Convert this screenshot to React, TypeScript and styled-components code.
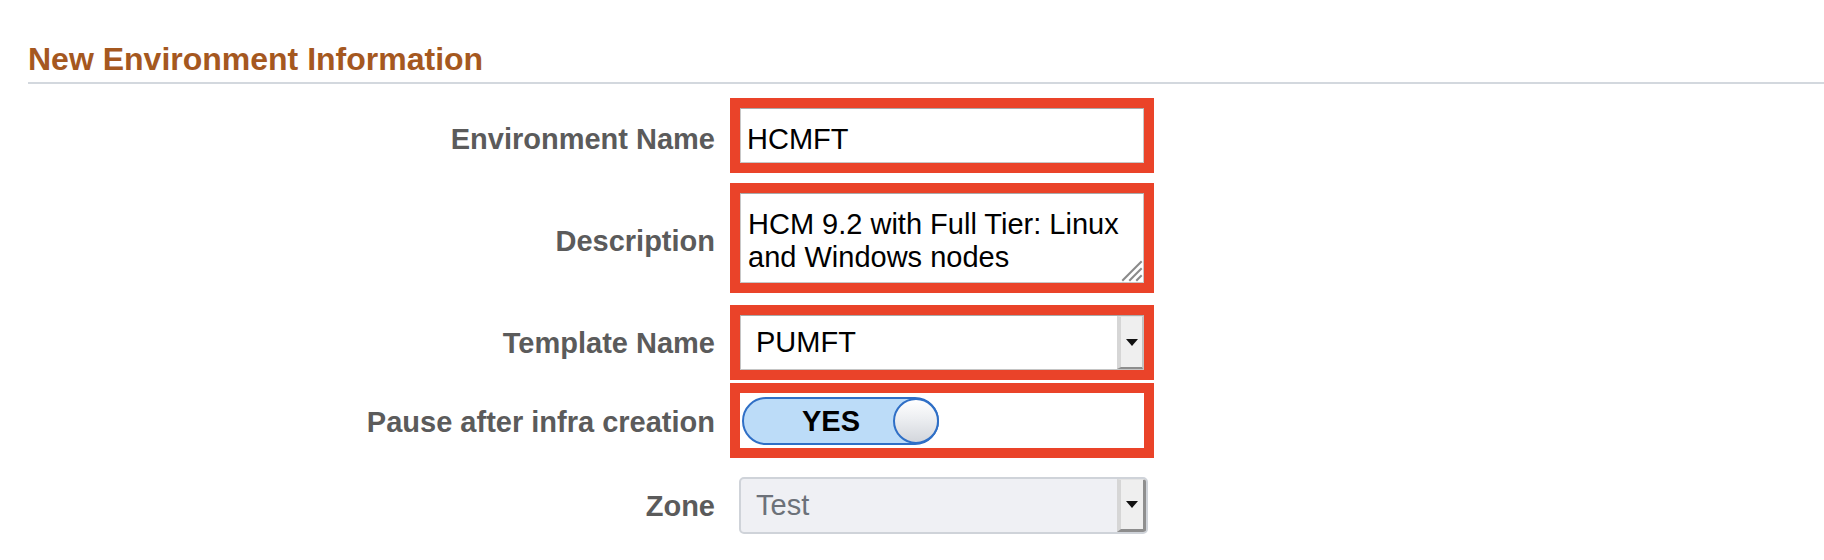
import React from "react";
import styled, { createGlobalStyle } from "styled-components";

const GlobalStyle = createGlobalStyle`
  html, body { margin: 0; padding: 0; background: #ffffff; }
  body { font-family: "Liberation Sans", Arial, sans-serif; }
`;

const Page = styled.div`
  width: 1824px;
  height: 560px;
  box-sizing: border-box;
  padding-top: 41px;
  overflow: hidden;
  background: #ffffff;
`;

const SectionHeader = styled.div`
  margin-left: 28px;
  padding-bottom: 4px;
  border-bottom: 2px solid #d3d8de;
`;

const Heading = styled.h2`
  margin: 0;
  font-size: 32px;
  line-height: 37px;
  font-weight: 700;
  color: #a5581f;
`;

const Form = styled.div`
  display: flex;
  flex-direction: column;
  padding-left: 30px;
  margin-top: 14px;
`;

const Row = styled.div<{ $gap: number }>`
  display: flex;
  align-items: center;
  gap: 15px;
  margin-top: ${(p) => p.$gap}px;
`;

const Label = styled.div<{ $drop: number }>`
  width: 685px;
  flex: none;
  text-align: right;
  font-size: 29px;
  line-height: 33px;
  font-weight: 700;
  color: #5b5b5b;
  padding-top: ${(p) => p.$drop}px;
`;

const Frame = styled.div<{ $marked?: boolean }>`
  width: 404px;
  flex: none;
  border: 10px solid ${(p) => (p.$marked ? "#ea4329" : "transparent")};
`;

const TextInput = styled.div`
  box-sizing: border-box;
  height: 55px;
  border: 1px solid #c7c7c7;
  border-top-color: #a9a9a9;
  padding: 14px 6px 0;
  font-size: 29px;
  line-height: 33px;
  color: #000000;
  background: #ffffff;
`;

const TextArea = styled.div`
  position: relative;
  box-sizing: border-box;
  height: 90px;
  border: 1px solid #c7c7c7;
  border-top-color: #a9a9a9;
  padding: 14px 6px 0 7px;
  font-size: 29px;
  line-height: 33px;
  color: #000000;
  background: #ffffff;
`;

const Grip = styled.svg`
  position: absolute;
  right: 0;
  bottom: 0;
  width: 22px;
  height: 22px;
`;

const Select = styled.div<{ $disabled?: boolean }>`
  box-sizing: border-box;
  display: flex;
  height: ${(p) => (p.$disabled ? 57 : 55)}px;
  width: ${(p) => (p.$disabled ? 409 : 404)}px;
  margin-left: ${(p) => (p.$disabled ? -1 : 0)}px;
  border: ${(p) => (p.$disabled ? "2px solid #cfd3d9" : "1px solid #c4c4c4")};
  border-top-color: ${(p) => (p.$disabled ? "#cfd3d9" : "#a9a9a9")};
  border-radius: ${(p) => (p.$disabled ? 5 : 0)}px;
  background: ${(p) => (p.$disabled ? "#eff0f4" : "#ffffff")};
  color: ${(p) => (p.$disabled ? "#6c7179" : "#000000")};
  overflow: hidden;
`;

const SelectValue = styled.div`
  flex: 1;
  padding: 10px 0 0 15px;
  font-size: 29px;
  line-height: 33px;
`;

const DropButton = styled.div<{ $disabled?: boolean }>`
  box-sizing: border-box;
  flex: none;
  width: ${(p) => (p.$disabled ? 29 : 26)}px;
  display: flex;
  align-items: center;
  justify-content: center;
  background: #efefef;
  border-left: 4px solid #d6d6d6;
  border-top: 1px solid #e4e4e4;
  border-bottom: ${(p) => (p.$disabled ? 3 : 2)}px solid #8d8d8d;
  border-right: ${(p) => (p.$disabled ? "3px solid #8f8f8f" : "1px solid #c2c2c2")};
`;

const Arrow = styled.span`
  width: 0;
  height: 0;
  border-left: 6px solid transparent;
  border-right: 6px solid transparent;
  border-top: 7px solid #111111;
`;

const ToggleArea = styled.div`
  box-sizing: border-box;
  height: 55px;
  padding: 4px 0 0 2px;
  background: #ffffff;
`;

const Toggle = styled.div`
  box-sizing: border-box;
  width: 197px;
  height: 48px;
  border: 2px solid #2f6fc6;
  border-radius: 24px;
  background: #bcdcf8;
  display: flex;
  align-items: center;
  padding-left: 58px;
`;

const ToggleText = styled.span`
  flex: 1;
  font-size: 29px;
  line-height: 33px;
  font-weight: 700;
  color: #000000;
`;

const Knob = styled.span`
  flex: none;
  box-sizing: border-box;
  width: 46px;
  height: 46px;
  margin-right: -2px;
  border: 2px solid #2f6fc6;
  border-radius: 50%;
  background: linear-gradient(#ffffff 0%, #eceef1 45%, #d3d6dc 100%);
`;

export default function App() {
  return (
    <>
      <GlobalStyle />
      <Page>
        <SectionHeader>
          <Heading>New Environment Information</Heading>
        </SectionHeader>
        <Form>
          <Row $gap={0}>
            <Label $drop={7}>Environment Name</Label>
            <Frame $marked>
              <TextInput>HCMFT</TextInput>
            </Frame>
          </Row>
          <Row $gap={10}>
            <Label $drop={7}>Description</Label>
            <Frame $marked>
              <TextArea>
                HCM 9.2 with Full Tier: Linux and Windows nodes
                <Grip viewBox="0 0 22 22">
                  <g stroke="#8a8a8a" strokeWidth="2" strokeLinecap="square">
                    <line x1="2" y1="20" x2="20" y2="2" />
                    <line x1="9" y1="20" x2="20" y2="9" />
                    <line x1="16" y1="20" x2="20" y2="16" />
                  </g>
                </Grip>
              </TextArea>
            </Frame>
          </Row>
          <Row $gap={12}>
            <Label $drop={1}>Template Name</Label>
            <Frame $marked>
              <Select>
                <SelectValue>PUMFT</SelectValue>
                <DropButton>
                  <Arrow />
                </DropButton>
              </Select>
            </Frame>
          </Row>
          <Row $gap={3}>
            <Label $drop={4}>Pause after infra creation</Label>
            <Frame $marked>
              <ToggleArea>
                <Toggle>
                  <ToggleText>YES</ToggleText>
                  <Knob />
                </Toggle>
              </ToggleArea>
            </Frame>
          </Row>
          <Row $gap={9}>
            <Label $drop={2}>Zone</Label>
            <Frame>
              <Select $disabled>
                <SelectValue>Test</SelectValue>
                <DropButton $disabled>
                  <Arrow />
                </DropButton>
              </Select>
            </Frame>
          </Row>
        </Form>
      </Page>
    </>
  );
}
